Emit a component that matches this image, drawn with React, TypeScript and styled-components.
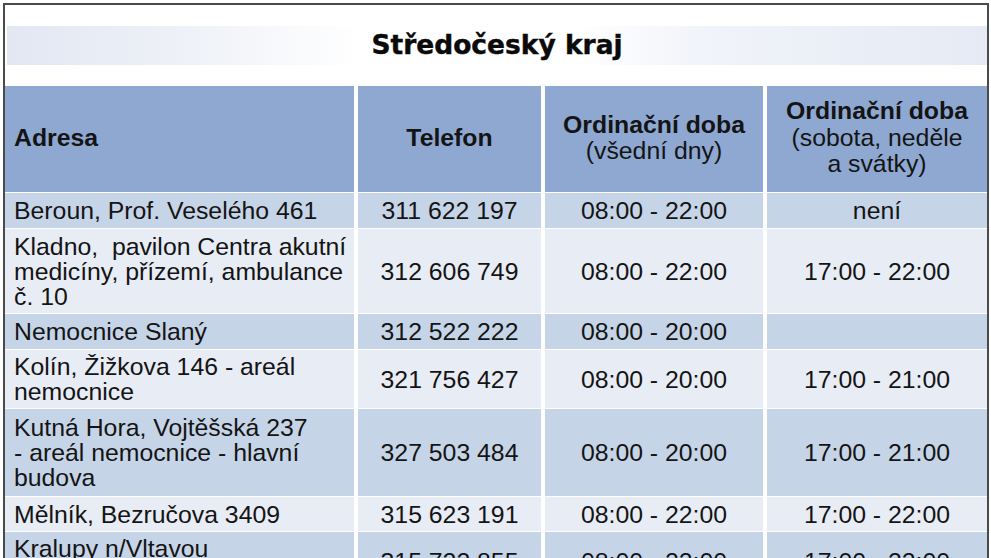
import React from "react";
import styled, { createGlobalStyle } from "styled-components";

const GlobalStyle = createGlobalStyle`
  html, body {
    margin: 0;
    padding: 0;
    background: #ffffff;
    overflow: hidden;
  }
  body {
    font-family: "Liberation Sans", Arial, sans-serif;
    color: #141414;
  }
`;

interface Clinic {
  address: string[];
  phone: string;
  weekdays: string;
  weekend: string;
  height: number;
}

const clinics: Clinic[] = [
  {
    address: ["Beroun, Prof. Veselého 461"],
    phone: "311 622 197",
    weekdays: "08:00 - 22:00",
    weekend: "není",
    height: 35,
  },
  {
    address: [
      "Kladno,\u00a0 pavilon Centra akutní",
      "medicíny, přízemí, ambulance",
      "č. 10",
    ],
    phone: "312 606 749",
    weekdays: "08:00 - 22:00",
    weekend: "17:00 - 22:00",
    height: 84,
  },
  {
    address: ["Nemocnice Slaný"],
    phone: "312 522 222",
    weekdays: "08:00 - 20:00",
    weekend: "",
    height: 35,
  },
  {
    address: ["Kolín, Žižkova 146 - areál", "nemocnice"],
    phone: "321 756 427",
    weekdays: "08:00 - 20:00",
    weekend: "17:00 - 21:00",
    height: 58,
  },
  {
    address: [
      "Kutná Hora, Vojtěšská 237",
      "- areál nemocnice - hlavní",
      "budova",
    ],
    phone: "327 503 484",
    weekdays: "08:00 - 20:00",
    weekend: "17:00 - 21:00",
    height: 87,
  },
  {
    address: ["Mělník, Bezručova 3409"],
    phone: "315 623 191",
    weekdays: "08:00 - 22:00",
    weekend: "17:00 - 22:00",
    height: 34,
  },
  {
    address: ["Kralupy n/Vltavou", "Mostní 128"],
    phone: "315 722 855",
    weekdays: "08:00 - 22:00",
    weekend: "17:00 - 22:00",
    height: 58,
  },
];

const Frame = styled.div`
  margin: 3px 0 0 3px;
  width: 982px;
  height: 600px;
  border: 2px solid #4a4a4a;
  background: #ffffff;
  display: flex;
  flex-direction: column;
  padding-top: 21px;
`;

const TitleBand = styled.div`
  height: 39px;
  margin: 0 0 0 2px;
  display: flex;
  align-items: center;
  justify-content: center;
  background: linear-gradient(
    90deg,
    #e2e7f2 0%,
    #eef1f7 18%,
    #ffffff 36%,
    #ffffff 58%,
    #f0f3f9 72%,
    #e5eaf4 100%
  );
`;

const Title = styled.h1`
  margin: 0 0 3px 0;
  font-family: "DejaVu Sans", Verdana, sans-serif;
  font-weight: bold;
  font-size: 26.5px;
  -webkit-text-stroke: 0.4px #0a0a0a;
  color: #0a0a0a;
`;

const Table = styled.div`
  margin-top: 21px;
  display: flex;
  flex-direction: column;
  gap: 1px;
`;

const Row = styled.div<{ $h: number }>`
  display: grid;
  grid-template-columns: 349px 183px 218px 220px;
  column-gap: 4px;
  height: ${(p) => p.$h}px;
`;

const Cell = styled.div<{ $tone: "head" | "dark" | "light"; $left?: boolean }>`
  display: flex;
  flex-direction: column;
  justify-content: center;
  align-items: ${(p) => (p.$left ? "flex-start" : "center")};
  text-align: ${(p) => (p.$left ? "left" : "center")};
  padding: 0 ${(p) => (p.$left ? "0 0 9px" : "0")};
  background: ${(p) =>
    p.$tone === "head" ? "#8ea8d2" : p.$tone === "dark" ? "#c6d4e8" : "#e8ecf5"};
  font-size: 24.8px;
  line-height: 25px;
  white-space: nowrap;
`;

const HeadCell = styled(Cell)`
  line-height: 26.5px;
  padding-bottom: 2px;
`;

const Strong = styled.span`
  font-weight: bold;
`;

const Line = styled.span`
  display: block;
`;

export default function App() {
  return (
    <>
      <GlobalStyle />
      <Frame>
        <TitleBand>
          <Title>Středočeský kraj</Title>
        </TitleBand>
        <Table>
          <Row $h={106}>
            <HeadCell $tone="head" $left>
              <Strong>Adresa</Strong>
            </HeadCell>
            <HeadCell $tone="head">
              <Strong>Telefon</Strong>
            </HeadCell>
            <HeadCell $tone="head">
              <Line>
                <Strong>Ordinační doba</Strong>
              </Line>
              <Line>(všední dny)</Line>
            </HeadCell>
            <HeadCell $tone="head">
              <Line>
                <Strong>Ordinační doba</Strong>
              </Line>
              <Line>(sobota, neděle</Line>
              <Line>a svátky)</Line>
            </HeadCell>
          </Row>
          {clinics.map((c, i) => {
            const tone = i % 2 === 0 ? "dark" : "light";
            return (
              <Row key={i} $h={c.height}>
                <Cell $tone={tone} $left>
                  {c.address.map((l, j) => (
                    <Line key={j}>{l}</Line>
                  ))}
                </Cell>
                <Cell $tone={tone}>{c.phone}</Cell>
                <Cell $tone={tone}>{c.weekdays}</Cell>
                <Cell $tone={tone}>{c.weekend}</Cell>
              </Row>
            );
          })}
        </Table>
      </Frame>
    </>
  );
}
